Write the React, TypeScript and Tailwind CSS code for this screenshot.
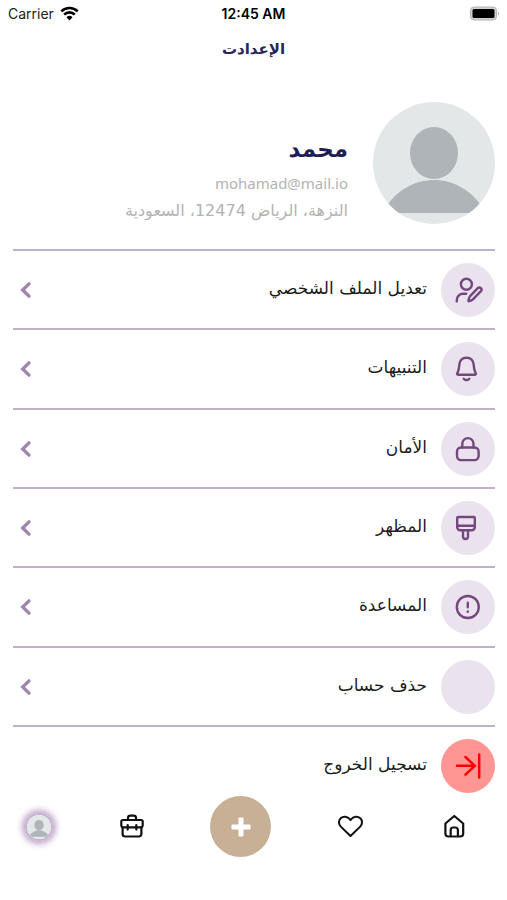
import type { ReactNode } from "react";

const menuItems: { label: string; href: string; icon: ReactNode }[] = [
    {
        label: "تعديل الملف الشخصي",
        href: "#profile",
        icon: (
            <>
                <circle cx="25.4" cy="21.3" r="5.5" />
                <path d="M15.8 38.4v-1.4a6.2 6.2 0 0 1 6.2-6.2h3.2" />
                <path d="M27.4 38.2c-.1-2 .4-3.5 1.7-5l7.7-8a2.1 2.1 0 0 1 3.1 3l-7.7 8c-1.4 1.4-2.9 2-4.8 2z" />
            </>
        ),
    },
    {
        label: "التنبيهات",
        href: "#notifications",
        icon: (
            <>
                <path d="M25.5 15.7c-4.3 0-6.9 3-7.2 7-.3 4.2-.6 6.2-2 8.4-.6.9-.2 1.7.9 1.7h16.6c1.1 0 1.5-.8.9-1.7-1.4-2.2-1.7-4.2-2-8.4-.3-4-2.9-7-7.2-7z" />
                <path d="M22.7 36.8c1.6 1.4 4 1.4 5.6 0" />
            </>
        ),
    },
    {
        label: "الأمان",
        href: "#security",
        icon: (
            <>
                <rect x="16" y="25.5" width="21.6" height="12.6" rx="4" />
                <path d="M21.3 25.5v-3.8a5.6 5.6 0 0 1 11.2 0v3.8" />
            </>
        ),
    },
    {
        label: "المظهر",
        href: "#appearance",
        icon: (
            <>
                <path d="M17.2 16h15.6a1 1 0 0 1 1 1v9.3a3 3 0 0 1-3 3H19.2a3 3 0 0 1-3-3V17a1 1 0 0 1 1-1z" />
                <path d="M16.2 24.7h17.6" />
                <path d="M22 29.5v6a2.5 2.5 0 0 0 5 0v-6" />
            </>
        ),
    },
    {
        label: "المساعدة",
        href: "#help",
        icon: (
            <>
                <circle cx="26.8" cy="27" r="11" />
                <path d="M26.8 22.8v4.4M26.8 31.5v.2" />
            </>
        ),
    },
    { label: "حذف حساب", href: "#delete", icon: null },
];

const Person = ({ className }: { className: string }) => (
    <svg viewBox="0 0 122 122" className={className} aria-hidden="true">
        <defs>
            <clipPath id="avatarClip">
                <circle cx="61" cy="61" r="61" />
            </clipPath>
        </defs>
        <g clipPath="url(#avatarClip)">
            <rect width="122" height="122" fill="#e4e7e8" />
            <ellipse cx="61" cy="51" rx="24" ry="26" fill="#aeb4b7" />
            <path d="M13 111V105C24 88 42 78 61 78s37 10 48 27v6z" fill="#aeb4b7" />
        </g>
    </svg>
);

const StatusBar = () => (
    <div dir="ltr" className="grid h-[26px] grid-cols-3 items-center px-2 font-['Inter',sans-serif] text-[14px] text-[#222222]">
        <div className="flex items-center gap-1.5">
            <span>Carrier</span>
            <svg width="19" height="15" viewBox="0 0 19 15" fill="none" stroke="#000" strokeWidth="2.6" aria-hidden="true">
                <path d="M1.3 5.4a11.7 11.7 0 0 1 16.4 0" />
                <path d="M4.2 8.6a7.5 7.5 0 0 1 10.6 0" />
                <path d="M9.5 14.4L6.5 11.2a4.3 4.3 0 0 1 6 0z" fill="#000" stroke="none" />
            </svg>
        </div>
        <span className="text-center font-semibold text-black">12:45 AM</span>
        <svg className="justify-self-end" width="30" height="15" viewBox="0 0 30 15" aria-hidden="true">
            <rect x="1.5" y="1" width="26" height="13" rx="3.5" fill="#d2d2d2" stroke="#b4b4b4" />
            <rect x="3.5" y="3" width="22" height="9" rx="1.5" fill="#000" />
            <path d="M29 5.2q2 2.3 0 4.6z" fill="#a8a8a8" />
        </svg>
    </div>
);

const App = () => {
    return (
        <div dir="rtl" className="flex min-h-screen w-full flex-col bg-white font-['DejaVu_Sans',sans-serif]">
            <StatusBar />
            <h1 className="text-center text-[15px] leading-[46px] font-bold text-[#29265b]">الإعدادت</h1>

            <section className="mx-3 mt-[29px] mb-6 flex items-center gap-[25px]">
                <Person className="size-[122px] shrink-0" />
                <div className="pt-7">
                    <h2 className="text-[23px] leading-10 font-bold text-[#1f1c57]">محمد</h2>
                    <p className="font-['Noto_Sans',sans-serif] text-[15px] leading-7 text-[#b3b3b3]">mohamad@mail.io</p>
                    <p className="text-[16px] leading-7 text-[#b3b3b3]">النزهة، الرياض 12474، السعودية</p>
                </div>
            </section>

            <nav className="ms-3 me-[13px] flex grow flex-col">
                {menuItems.map((item) => (
                    <a
                        key={item.href}
                        href={item.href}
                        className="flex grow items-center gap-3.5 border-t-2 border-[#c0b0c8] pt-3 pb-[11px]"
                    >
                        <span className="size-[54px] shrink-0 rounded-full bg-[#eae3ee]">
                            <svg
                                viewBox="0 0 54 54"
                                fill="none"
                                stroke="#74477f"
                                strokeWidth="2.4"
                                strokeLinecap="round"
                                strokeLinejoin="round"
                                aria-hidden="true"
                            >
                                {item.icon}
                            </svg>
                        </span>
                        <span className="grow pb-1 text-[17px] leading-6 text-[#1c1c1c]">{item.label}</span>
                        <svg
                            className="me-1.5"
                            width="14"
                            height="18"
                            viewBox="0 0 14 18"
                            fill="none"
                            stroke="#a086ad"
                            strokeWidth="3.4"
                            strokeLinecap="round"
                            aria-hidden="true"
                        >
                            <path d="M10 2.9L3.7 9l6.3 6.1" />
                        </svg>
                    </a>
                ))}
                <button type="button" className="flex items-center gap-3.5 border-t-2 border-[#c0b0c8] pt-3 pb-[3px] text-start">
                    <span className="size-[54px] shrink-0 rounded-full bg-[#ff9694]">
                        <svg
                            viewBox="0 0 54 54"
                            fill="none"
                            stroke="#ff0000"
                            strokeWidth="2.5"
                            strokeLinecap="round"
                            strokeLinejoin="round"
                            aria-hidden="true"
                        >
                            <path d="M16 26.8h18M24.5 18l9.2 8.8-9.2 8.8M38.2 15.5v23" />
                        </svg>
                    </span>
                    <span className="pb-1 text-[17px] leading-6 text-[#1c1c1c]">تسجيل الخروج</span>
                </button>
            </nav>

            <footer className="h-[104px] shrink-0 ps-[41px] pe-[25px]">
                <nav className="flex items-center justify-between">
                    <a href="#home" aria-label="الرئيسية" className="pe-3 pb-0.5">
                        <svg width="24" height="24" viewBox="0 0 24 24" fill="none" stroke="#111" strokeWidth="2.2" strokeLinejoin="round">
                            <path d="M3.4 9.5L12.3 2l8.9 7.5v10a3 3 0 0 1-3 3H6.4a3 3 0 0 1-3-3z" />
                            <path d="M8.7 22.5V16a2.5 2.5 0 0 1 2.5-2.5h2.2a2.5 2.5 0 0 1 2.5 2.5v6.5" />
                        </svg>
                    </a>
                    <a href="#favorites" aria-label="المفضلة" className="pb-0.5">
                        <svg width="26" height="24" viewBox="0 0 26 24" fill="none" stroke="#111" strokeWidth="2" strokeLinejoin="round">
                            <path d="M12.5 22L2.8 12.6C.4 10.2.4 6.5 2.7 4.3c2.6-2.5 7-2.1 9.1.9l.7.9.7-.9c2.1-3 6.5-3.4 9.1-.9 2.3 2.2 2.3 5.9-.1 8.3z" />
                        </svg>
                    </a>
                    <button type="button" aria-label="إضافة" className="grid size-[61px] place-items-center rounded-full bg-[#c7b096]">
                        <svg width="20" height="20" viewBox="0 0 20 20" fill="#fff">
                            <rect x="7.5" y="0.5" width="5" height="19" rx="1" />
                            <rect x="0.5" y="7.5" width="19" height="5" rx="1" />
                        </svg>
                    </button>
                    <a href="#jobs" aria-label="الأعمال" className="pb-0.5">
                        <svg width="24" height="24" viewBox="0 0 24 24" fill="none" stroke="#111" strokeWidth="2.2" strokeLinecap="round" strokeLinejoin="round">
                            <path d="M2.7 6h18.6a1.4 1.4 0 0 1 1.4 1.4v3.9a2 2 0 0 1-2 2H3.3a2 2 0 0 1-2-2V7.4A1.4 1.4 0 0 1 2.7 6z" />
                            <path d="M2.6 13.3V20a2.5 2.5 0 0 0 2.5 2.5h13.8a2.5 2.5 0 0 0 2.5-2.5v-6.7" />
                            <path d="M8 6V4a2.3 2.3 0 0 1 2.3-2.3h3.4A2.3 2.3 0 0 1 16 4v2M7.7 11v4.6M16.3 11v4.6" />
                        </svg>
                    </a>
                    <a href="#account" aria-label="الحساب" className="rounded-full border-2 border-[#c6b2ce] shadow-[0_0_6px_3px_#bda3c7]">
                        <Person className="size-6" />
                    </a>
                </nav>
            </footer>
        </div>
    );
};

export default App;
